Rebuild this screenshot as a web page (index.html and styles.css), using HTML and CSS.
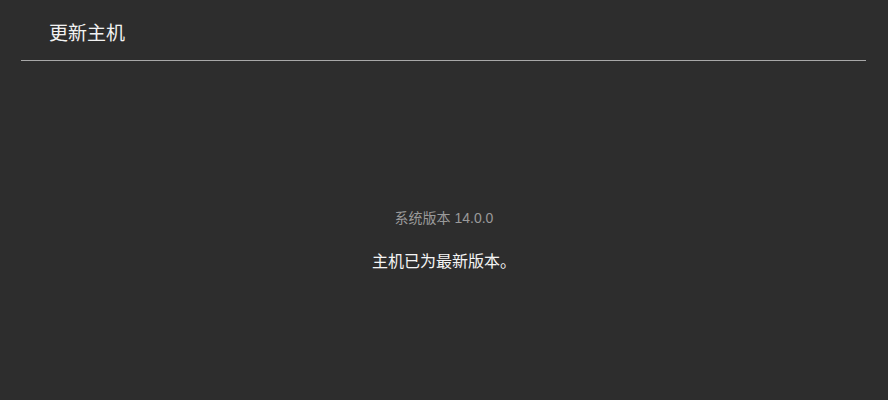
FILE: index.html
```html
<!DOCTYPE html>
<html lang="zh-CN">
<head>
<meta charset="utf-8">
<title>更新主机</title>
<link rel="stylesheet" href="styles.css">
</head>
<body>
<div class="page">
  <header class="header">
    <h1 class="title">更新主机</h1>
  </header>
  <main class="content">
    <p class="version">系统版本 14.0.0</p>
    <p class="status">主机已为最新版本。</p>
  </main>
</div>
</body>
</html>
```
FILE: styles.css
```css
html, body {
  margin: 0;
  padding: 0;
  background: #2d2d2d;
}

.page {
  width: 888px;
  height: 400px;
  display: flex;
  flex-direction: column;
  font-family: "Liberation Sans", "Noto Sans CJK SC", sans-serif;
  color: #f2f2f2;
}

.header {
  margin: 0 22px 0 21px;
  height: 61px;
  border-bottom: 1px solid #a8a8a8;
  box-sizing: border-box;
  display: flex;
  align-items: center;
  padding-left: 28px;
}

.title {
  margin: 0;
  font-size: 19px;
  font-weight: 400;
  line-height: 1;
  margin-top: 6px;
}

.content {
  display: flex;
  flex-direction: column;
  align-items: center;
  padding-top: 148px;
}

.version {
  margin: 0;
  font-size: 14px;
  line-height: 18px;
  color: #9a9a9a;
}

.status {
  margin: 25px 0 0;
  font-size: 16px;
  line-height: 20px;
  color: #f5f5f5;
}
```
